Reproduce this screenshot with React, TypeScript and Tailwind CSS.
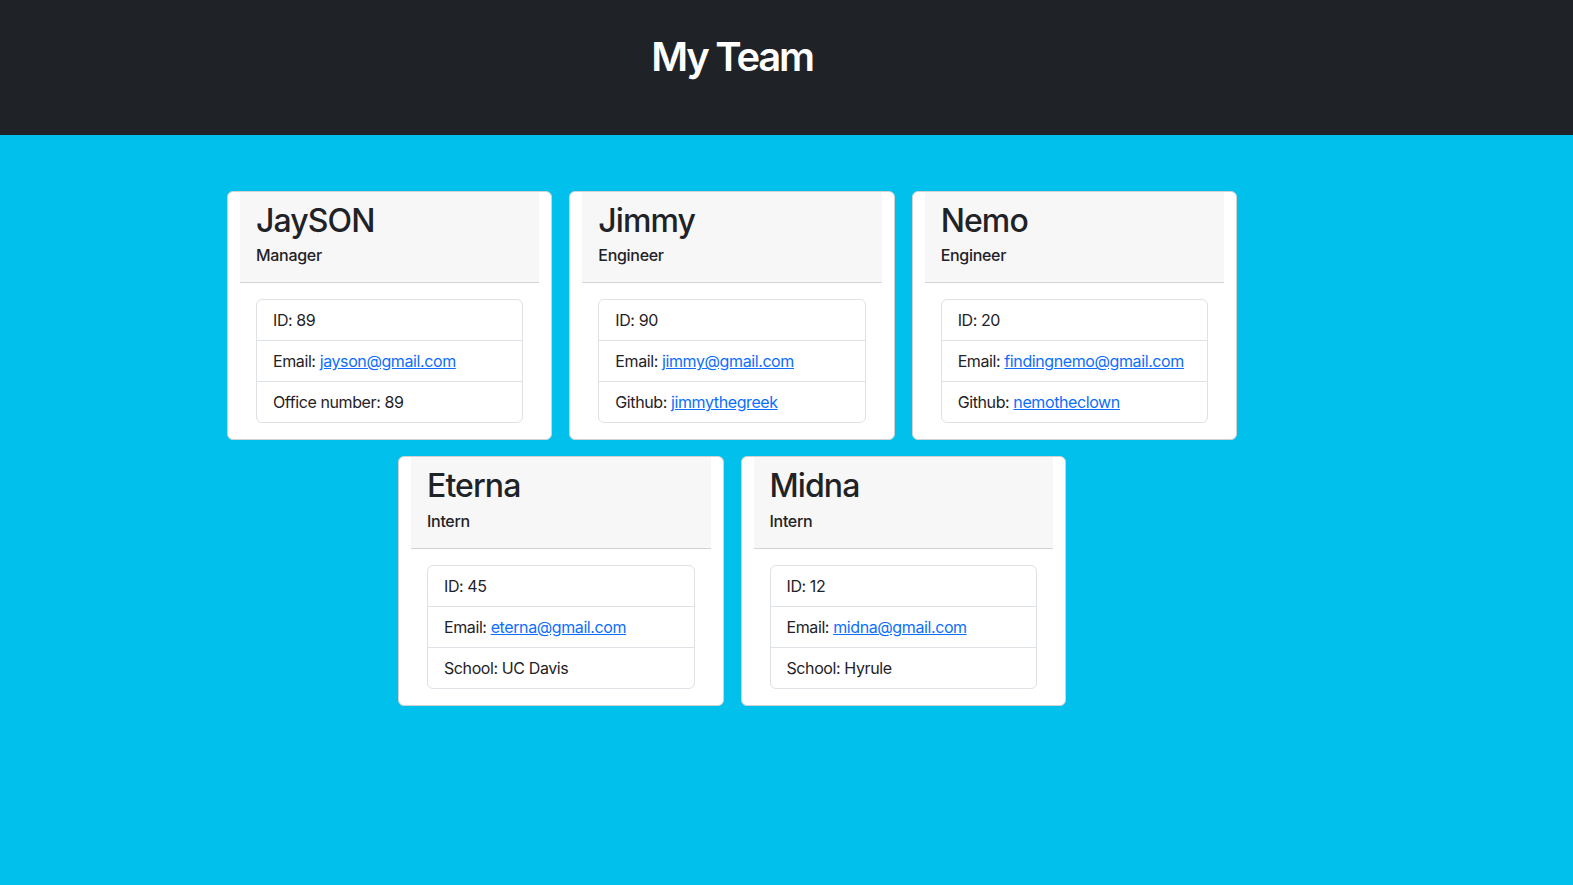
import React from "react";

type Member = {
  name: string;
  role: string;
  id: number;
  email: string;
  extraLabel: string;
  extraValue: string;
  extraLink?: boolean;
};

const row1: Member[] = [
  { name: "JaySON", role: "Manager", id: 89, email: "jayson@gmail.com", extraLabel: "Office number", extraValue: "89" },
  { name: "Jimmy", role: "Engineer", id: 90, email: "jimmy@gmail.com", extraLabel: "Github", extraValue: "jimmythegreek", extraLink: true },
  { name: "Nemo", role: "Engineer", id: 20, email: "findingnemo@gmail.com", extraLabel: "Github", extraValue: "nemotheclown", extraLink: true },
];

const row2: Member[] = [
  { name: "Eterna", role: "Intern", id: 45, email: "eterna@gmail.com", extraLabel: "School", extraValue: "UC Davis" },
  { name: "Midna", role: "Intern", id: 12, email: "midna@gmail.com", extraLabel: "School", extraValue: "Hyrule" },
];

function Card({ m }: { m: Member }) {
  return (
    <div className="w-[325.5px] bg-white border border-[#cfd1d3] rounded-[6px] px-[12px]">
      <div className="bg-[#f7f7f7] border-b border-[#d2d3d4] px-4 pt-[10px] pb-[15px]">
        <div className="text-[32px] leading-[38.4px] font-medium tracking-[-0.9px] text-[#1f2226]">{m.name}</div>
        <div className="mt-[3px] text-[16px] leading-6 font-medium tracking-[-0.3px] text-[#1f2226]">{m.role}</div>
      </div>
      <div className="p-4">
        <ul className="border border-[#dee2e6] rounded-[6px] text-[16px] leading-6 tracking-[-0.4px] text-[#1f2226]">
          <li className="px-4 py-2 whitespace-nowrap">ID: {m.id}</li>
          <li className="px-4 py-2 border-t border-[#dee2e6] whitespace-nowrap">
            Email: <a href="#" className="text-[#0d6efd] underline">{m.email}</a>
          </li>
          <li className="px-4 py-2 border-t border-[#dee2e6] whitespace-nowrap">
            {m.extraLabel}:{" "}
            {m.extraLink ? (
              <a href="#" className="text-[#0d6efd] underline">{m.extraValue}</a>
            ) : (
              m.extraValue
            )}
          </li>
        </ul>
      </div>
    </div>
  );
}

export default function App() {
  return (
    <div className="min-h-[885px] bg-[#01c1ec]" style={{ fontFamily: "Inter, 'Noto Sans', sans-serif" }}>
      <header className="h-[135px] bg-[#1f2226] pt-[33px]">
        <div className="ml-[227px] w-[1010px] text-center text-[40px] leading-[48px] font-semibold tracking-[-2.2px] text-white">
          My Team
        </div>
      </header>
      <main className="ml-[227px] w-[1010px] pt-[56px] flex flex-col gap-[16px]">
        <div className="flex justify-center gap-[17px]">
          {row1.map((m) => (
            <Card key={m.name} m={m} />
          ))}
        </div>
        <div className="flex justify-center gap-[17px]">
          {row2.map((m) => (
            <Card key={m.name} m={m} />
          ))}
        </div>
      </main>
    </div>
  );
}
